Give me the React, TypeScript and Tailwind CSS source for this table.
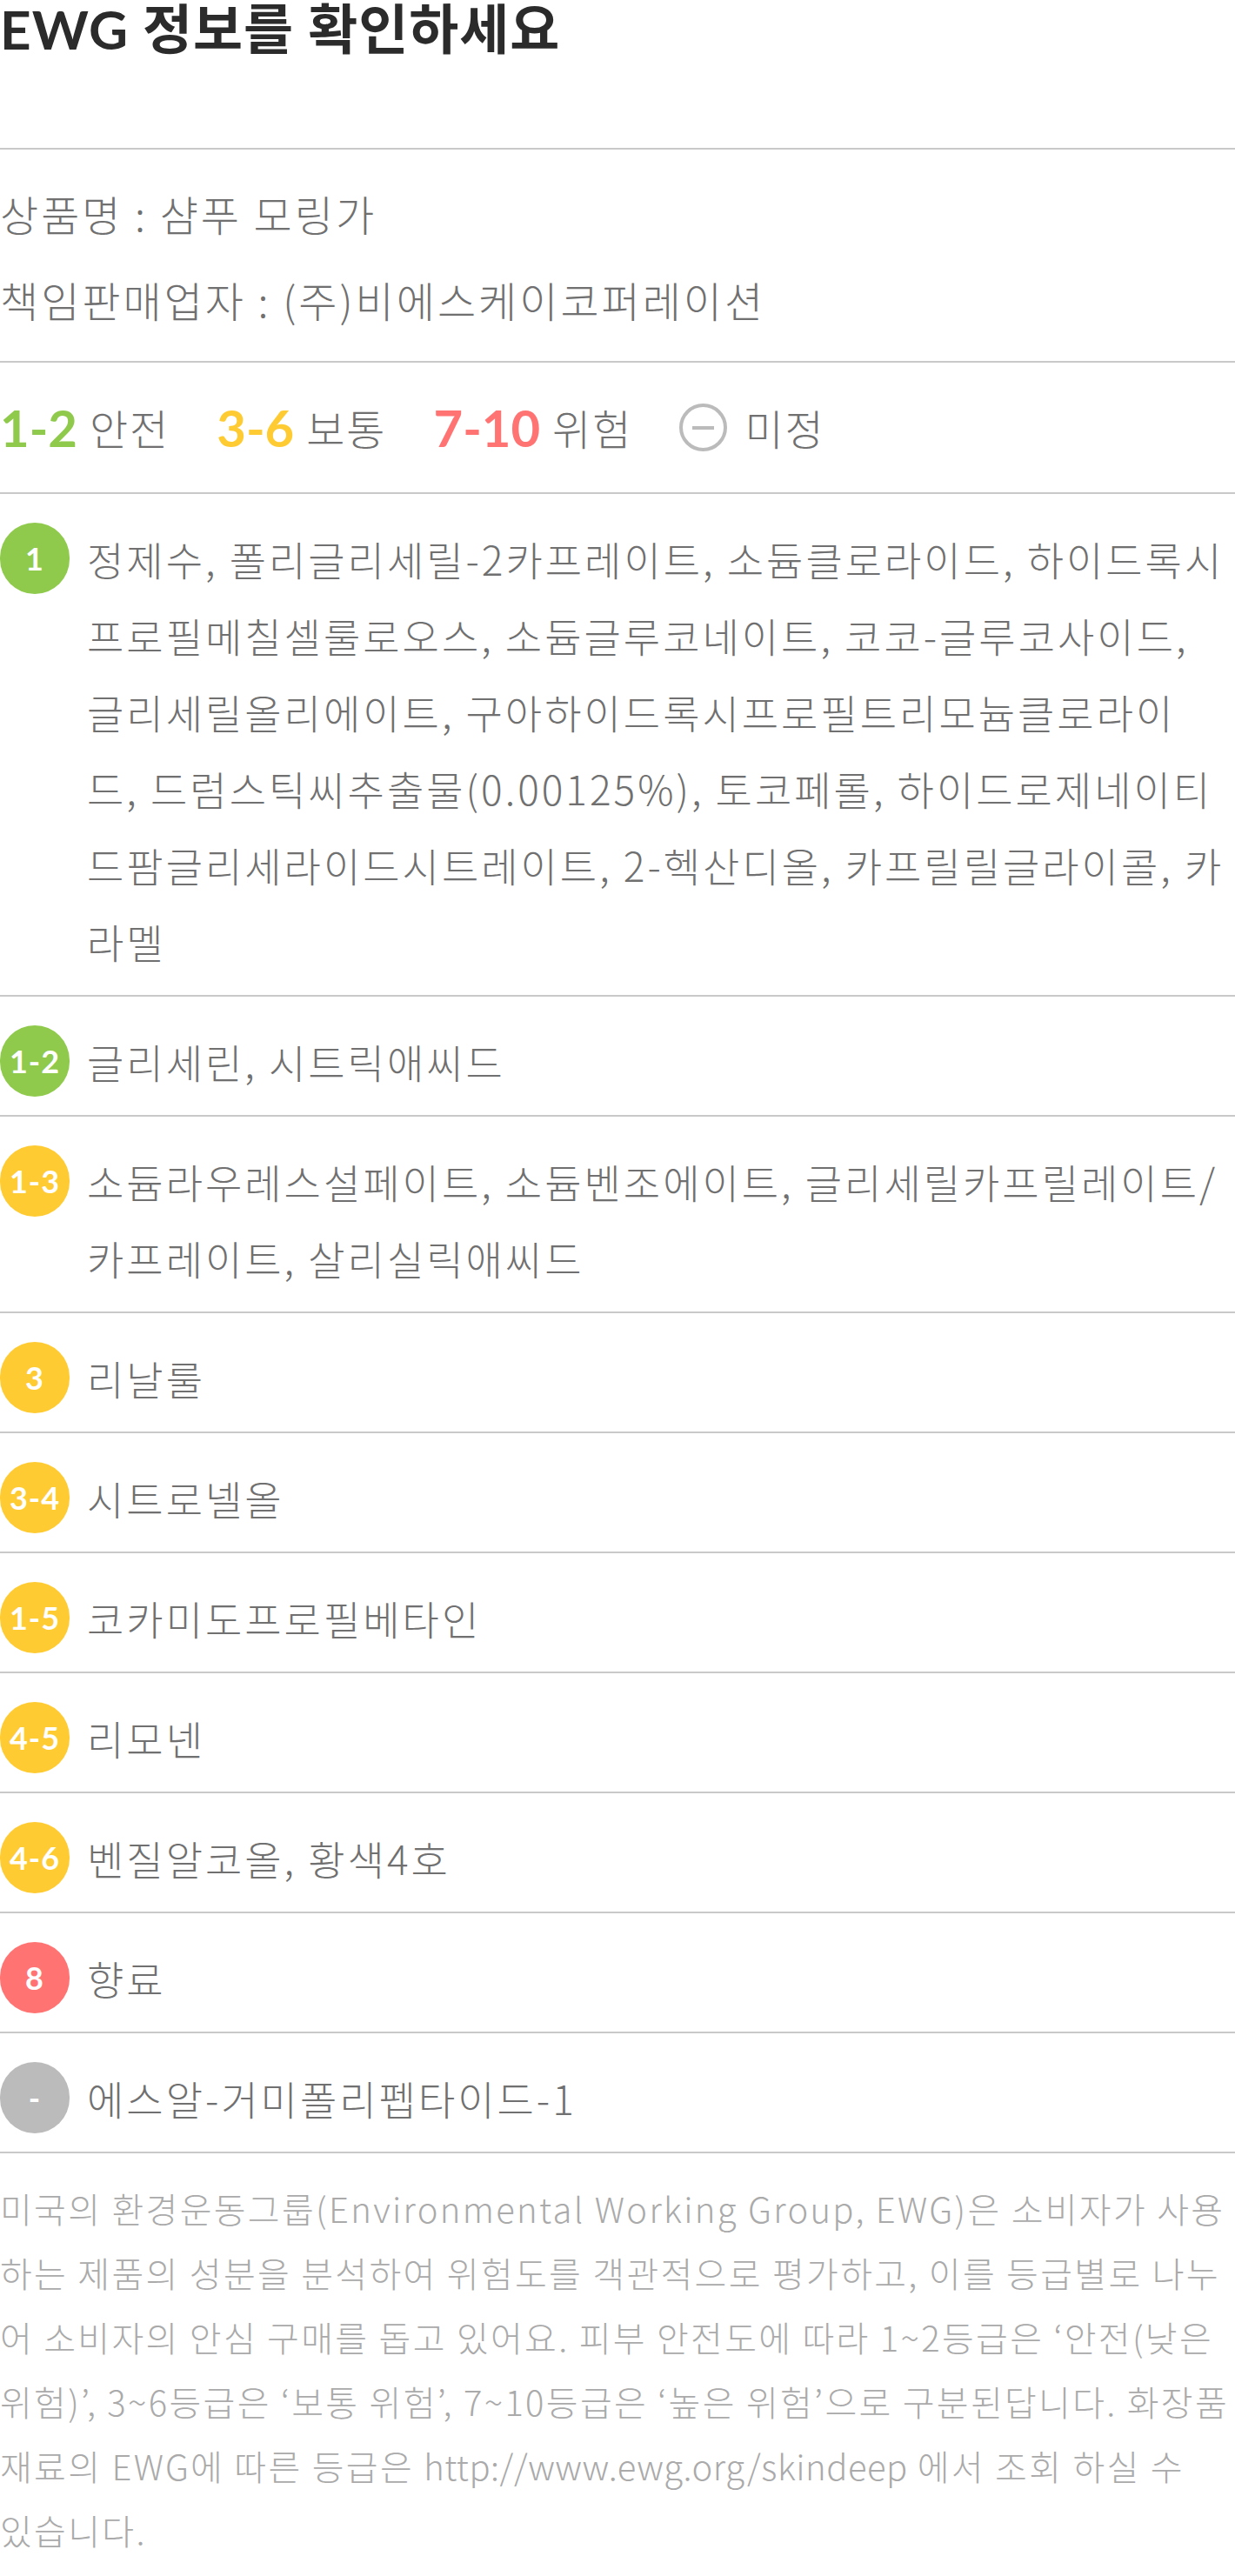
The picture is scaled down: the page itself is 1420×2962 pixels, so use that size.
import React from "react";

type Grade = "safe" | "normal" | "danger" | "unknown";

const BADGE_COLOR: Record<Grade, string> = {
  safe: "bg-[#8fca4c]",
  normal: "bg-[#ffcb32]",
  danger: "bg-[#ff7473]",
  unknown: "bg-[#bbbbbb]",
};

// 줄바꿈 위치는 원본 화면과 같게 맞춤
const INGREDIENTS: { grade: Grade; score: string; lines: string[] }[] = [
  {
    grade: "safe",
    score: "1",
    lines: [
      "정제수, 폴리글리세릴-2카프레이트, 소듐클로라이드, 하이드록시",
      "프로필메칠셀룰로오스, 소듐글루코네이트, 코코-글루코사이드,",
      "글리세릴올리에이트, 구아하이드록시프로필트리모늄클로라이",
      "드, 드럼스틱씨추출물(0.00125%), 토코페롤, 하이드로제네이티",
      "드팜글리세라이드시트레이트, 2-헥산디올, 카프릴릴글라이콜, 카",
      "라멜",
    ],
  },
  { grade: "safe", score: "1-2", lines: ["글리세린, 시트릭애씨드"] },
  {
    grade: "normal",
    score: "1-3",
    lines: [
      "소듐라우레스설페이트, 소듐벤조에이트, 글리세릴카프릴레이트/",
      "카프레이트, 살리실릭애씨드",
    ],
  },
  { grade: "normal", score: "3", lines: ["리날룰"] },
  { grade: "normal", score: "3-4", lines: ["시트로넬올"] },
  { grade: "normal", score: "1-5", lines: ["코카미도프로필베타인"] },
  { grade: "normal", score: "4-5", lines: ["리모넨"] },
  { grade: "normal", score: "4-6", lines: ["벤질알코올, 황색4호"] },
  { grade: "danger", score: "8", lines: ["향료"] },
  { grade: "unknown", score: "-", lines: ["에스알-거미폴리펩타이드-1"] },
];

const LEGEND = [
  { range: "1-2", label: "안전", color: "text-[#8fca4c]" },
  { range: "3-6", label: "보통", color: "text-[#ffcb32]" },
  { range: "7-10", label: "위험", color: "text-[#ff7473]" },
];

const Badge = ({ grade, score }: { grade: Grade; score: string }) => (
  <span
    className={`mt-[3px] flex h-[82px] w-[80px] shrink-0 items-center justify-center rounded-full font-['Lato',sans-serif] text-[36px] font-bold tracking-[1px] text-white ${BADGE_COLOR[grade]}`}
  >
    {score}
  </span>
);

export default function App() {
  return (
    <div className="w-[1420px] bg-white font-['Noto_Sans_CJK_KR','Noto_Sans',sans-serif] font-light text-[#707070]">
      {/* 제목 */}
      <h2 className="pb-[104px] font-['Lato','Noto_Sans_CJK_KR',sans-serif] text-[62px] leading-[66px] font-bold tracking-[1px] text-[#2b2b2b]">
        EWG 정보를 확인하세요
      </h2>

      {/* 상품 정보 */}
      <div className="flex flex-col gap-[33px] border-t-2 border-[#c9c9c9] pt-10 pb-[38px] text-[48px] leading-[66px] tracking-[3px]">
        <p>상품명 : 샴푸 모링가</p>
        <p>책임판매업자 : (주)비에스케이코퍼레이션</p>
      </div>

      {/* 등급 범례 */}
      <div className="flex items-center gap-[54px] border-t-2 border-[#c9c9c9] py-[45px] leading-[59px]">
        {LEGEND.map(({ range, label, color }) => (
          <div key={range} className="flex items-center gap-[14px]">
            <span
              className={`font-['Lato',sans-serif] text-[58px] font-bold ${color}`}
            >
              {range}
            </span>
            <span className="text-[48px] tracking-[2px]">{label}</span>
          </div>
        ))}
        <div className="flex items-center gap-[20px]">
          <span className="flex h-[55px] w-[55px] items-center justify-center rounded-full border-4 border-[#bbbbbb]">
            <span className="h-[4px] w-[25px] bg-[#bbbbbb]" />
          </span>
          <span className="text-[48px] tracking-[2px]">미정</span>
        </div>
      </div>

      {/* 성분 목록 */}
      <ul className="border-t-2 border-[#c9c9c9]">
        {INGREDIENTS.map(({ grade, score, lines }) => (
          <li
            key={score + lines[0]}
            className="flex items-start gap-[20px] border-b-2 border-[#c9c9c9] pt-[30px] pb-[18px]"
          >
            <Badge grade={grade} score={score} />
            <p className="min-w-0 flex-1 text-[46px] leading-[88px] tracking-[3px]">
              {lines.map((line) => (
                <span key={line} className="block whitespace-nowrap">
                  {line}
                </span>
              ))}
            </p>
          </li>
        ))}
      </ul>

      {/* 안내 문구 */}
      <div className="pt-[26px] pb-[18px] text-[40px] leading-[74px] tracking-[2.3px] whitespace-nowrap text-[#aaaaaa]">
        <p>미국의 환경운동그룹(Environmental Working Group, EWG)은 소비자가 사용</p>
        <p>하는 제품의 성분을 분석하여 위험도를 객관적으로 평가하고, 이를 등급별로 나누</p>
        <p>어 소비자의 안심 구매를 돕고 있어요. 피부 안전도에 따라 1~2등급은 ‘안전(낮은</p>
        <p>위험)’, 3~6등급은 ‘보통 위험’, 7~10등급은 ‘높은 위험’으로 구분된답니다. 화장품</p>
        <p>
          재료의 EWG에 따른 등급은{" "}
          <span className="tracking-[0.5px]">http://www.ewg.org/skindeep</span>{" "}
          에서 조회 하실 수
        </p>
        <p>있습니다.</p>
      </div>
    </div>
  );
}
